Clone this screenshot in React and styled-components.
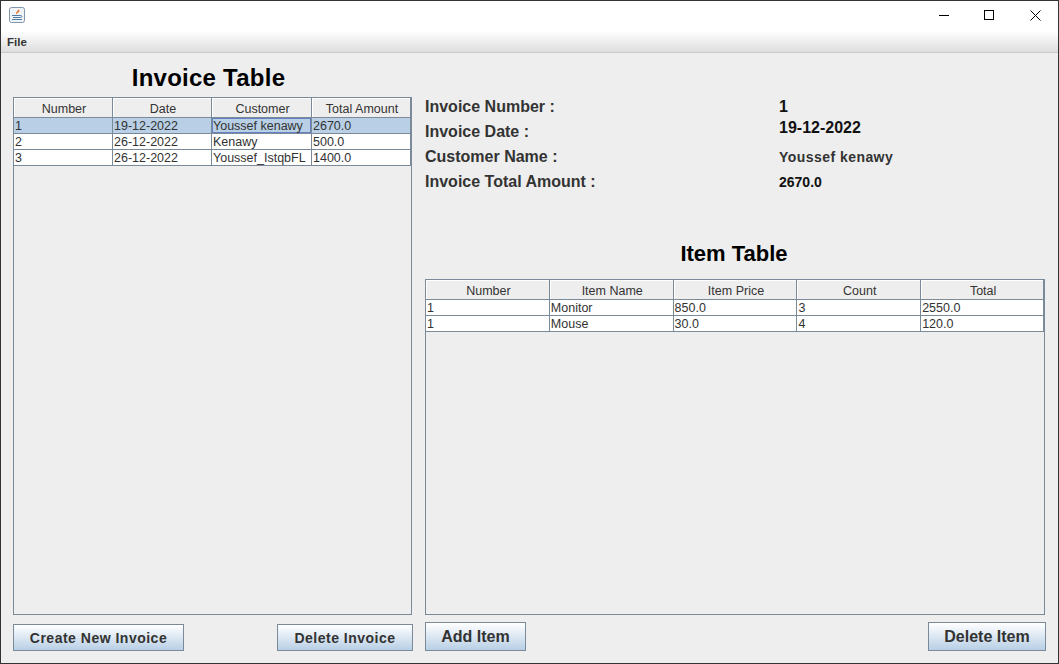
import React from 'react';
import styled, { createGlobalStyle } from 'styled-components';

const GlobalStyle = createGlobalStyle`
	html, body {
		margin: 0;
		padding: 0;
		background: #eeeeee;
	}
	body {
		font-family: "Liberation Sans", Arial, sans-serif;
	}
`;

const invoiceColumns = [
	{ title: 'Number', width: 99 },
	{ title: 'Date', width: 99 },
	{ title: 'Customer', width: 100 },
	{ title: 'Total Amount', width: 99 },
];

const invoiceRows = [
	['1', '19-12-2022', 'Youssef kenawy', '2670.0'],
	['2', '26-12-2022', 'Kenawy', '500.0'],
	['3', '26-12-2022', 'Youssef_IstqbFL', '1400.0'],
];

const itemColumns = [
	{ title: 'Number', width: 124 },
	{ title: 'Item Name', width: 124 },
	{ title: 'Item Price', width: 124 },
	{ title: 'Count', width: 124 },
	{ title: 'Total', width: 123 },
];

const itemRows = [
	['1', 'Monitor', '850.0', '3', '2550.0'],
	['1', 'Mouse', '30.0', '4', '120.0'],
];

const details = [
	{ label: 'Invoice Number :', value: '1', size: 16, shift: 0 },
	{ label: 'Invoice Date :', value: '19-12-2022', size: 16, shift: -4 },
	{ label: 'Customer Name :', value: 'Youssef kenawy', size: 14, spacing: 0.45, shift: 0 },
	{ label: 'Invoice Total Amount :', value: '2670.0', size: 14, shift: 0 },
];

const DataTable = ({ columns, rows, selectedRow, focusedColumn }) => (
	<TablePane>
		<Grid>
			<colgroup>
				{columns.map(column => (
					<col key={column.title} width={column.width} />
				))}
			</colgroup>
			<thead>
				<tr>
					{columns.map(column => (
						<HeaderCell key={column.title}>{column.title}</HeaderCell>
					))}
				</tr>
			</thead>
			<tbody>
				{rows.map((row, rowIndex) => (
					<tr key={rowIndex}>
						{row.map((cell, cellIndex) => (
							<Cell
								key={cellIndex}
								$selected={rowIndex === selectedRow}
								$focused={rowIndex === selectedRow && cellIndex === focusedColumn}
							>
								{cell}
							</Cell>
						))}
					</tr>
				))}
			</tbody>
		</Grid>
	</TablePane>
);

const JavaIcon = () => (
	<svg width="16" height="16" viewBox="0 0 16 16">
		<rect x="0.5" y="0.5" width="15" height="15" rx="2" fill="#f1f4f7" stroke="#7f97ad" />
		<path d="M9.5 2C10 3.5 6.5 4.5 7 7.5C8 6 10.5 5.5 10.5 3.5C10 3 9.8 2.4 9.5 2Z" fill="#e2762e" />
		<path d="M3 8.5H11.5M4 10.5H11M3 12.5H13" stroke="#4f7ca6" strokeWidth="1.1" />
		<path d="M11.5 8.5C13.5 8.5 13.5 10.5 11 10.5" fill="none" stroke="#4f7ca6" />
	</svg>
);

const App = () => (
	<Frame>
		<GlobalStyle />
		<TitleBar>
			<JavaIcon />
			<WindowControls>
				<WindowControl>
					<svg width="12" height="10" viewBox="0 0 12 10">
						<path d="M2 5.5H12" stroke="#000" />
					</svg>
				</WindowControl>
				<WindowControl>
					<svg width="10" height="10" viewBox="0 0 10 10">
						<rect x="0.5" y="0.5" width="9" height="9" fill="none" stroke="#000" />
					</svg>
				</WindowControl>
				<WindowControl>
					<svg width="11" height="11" viewBox="0 0 11 11">
						<path d="M0.5 0.5L10.5 10.5M10.5 0.5L0.5 10.5" stroke="#000" />
					</svg>
				</WindowControl>
			</WindowControls>
		</TitleBar>
		<MenuBar>
			<MenuItem>File</MenuItem>
		</MenuBar>
		<Content>
			<LeftColumn>
				<InvoiceTitle>Invoice Table</InvoiceTitle>
				<DataTable columns={invoiceColumns} rows={invoiceRows} selectedRow={0} focusedColumn={2} />
				<LeftActions>
					<SmallButton $width={171}>Create New Invoice</SmallButton>
					<SmallButton $width={136}>Delete Invoice</SmallButton>
				</LeftActions>
			</LeftColumn>
			<RightColumn>
				<Details>
					{details.map(detail => (
						<DetailRow key={detail.label}>
							<DetailLabel>{detail.label}</DetailLabel>
							<DetailValue $size={detail.size} $spacing={detail.spacing} $shift={detail.shift}>
								{detail.value}
							</DetailValue>
						</DetailRow>
					))}
				</Details>
				<ItemTitle>Item Table</ItemTitle>
				<DataTable columns={itemColumns} rows={itemRows} />
				<RightActions>
					<LargeButton $width={101}>Add Item</LargeButton>
					<LargeButton $width={118}>Delete Item</LargeButton>
				</RightActions>
			</RightColumn>
		</Content>
	</Frame>
);

const Frame = styled.div`
	box-sizing: border-box;
	width: 1059px;
	height: 664px;
	display: flex;
	flex-direction: column;
	border: 1px solid #333333;
	background: #eeeeee;
	overflow: hidden;
`;

const TitleBar = styled.div`
	box-sizing: border-box;
	display: flex;
	align-items: center;
	justify-content: space-between;
	height: 30px;
	padding: 0 0 2px 8px;
	background: #ffffff;
`;

const WindowControls = styled.div`
	display: flex;
`;

const WindowControl = styled.div`
	display: flex;
	align-items: center;
	justify-content: center;
	width: 46px;
	height: 28px;
`;

const MenuBar = styled.div`
	display: flex;
	align-items: center;
	box-sizing: border-box;
	height: 22px;
	padding-left: 6px;
	background: linear-gradient(#ffffff, #dddddd);
	border-bottom: 1px solid #c9c9c9;
`;

const MenuItem = styled.span`
	font-size: 11.5px;
	font-weight: bold;
	color: #333333;
`;

const Content = styled.div`
	flex: 1;
	display: flex;
	gap: 12px;
	min-height: 0;
	padding-left: 12px;
	padding-bottom: 12px;
`;

const LeftColumn = styled.div`
	display: flex;
	flex-direction: column;
	width: 400px;
`;

const RightColumn = styled.div`
	display: flex;
	flex-direction: column;
	width: 621px;
`;

const InvoiceTitle = styled.h1`
	box-sizing: border-box;
	height: 44px;
	margin: 0;
	padding: 11px 9px 0 0;
	font-size: 24px;
	line-height: 28px;
	letter-spacing: 0.25px;
	text-align: center;
	color: #000000;
`;

const ItemTitle = styled.h2`
	box-sizing: border-box;
	height: 39px;
	margin: 0;
	padding: 1px 3px 0 0;
	font-size: 22px;
	line-height: 26px;
	text-align: center;
	color: #000000;
`;

const Details = styled.div`
	box-sizing: border-box;
	display: flex;
	flex-direction: column;
	height: 187px;
	padding-top: 41px;
`;

const DetailRow = styled.div`
	display: flex;
	align-items: center;
	height: 25px;
`;

const DetailLabel = styled.span`
	width: 354px;
	font-size: 16px;
	font-weight: bold;
	color: #333333;
`;

const DetailValue = styled.span`
	font-size: ${props => props.$size}px;
	font-weight: bold;
	letter-spacing: ${props => props.$spacing || 0}px;
	color: ${props => (props.$spacing ? '#333333' : '#111111')};
	transform: translateY(${props => props.$shift}px);
`;

const TablePane = styled.div`
	flex: 1;
	box-sizing: border-box;
	margin-right: 1px;
	border: 1px solid #7a8a99;
	min-height: 0;
	overflow: hidden;
`;

const Grid = styled.table`
	table-layout: fixed;
	border-collapse: separate;
	border-spacing: 0;
	font-size: 12.5px;
	color: #333333;
`;

const HeaderCell = styled.th`
	box-sizing: border-box;
	height: 20px;
	padding: 2px 0 0 2px;
	font-weight: normal;
	text-align: center;
	background: #eeeeee;
	border-right: 1px solid #7a8a99;
	border-bottom: 1px solid #7a8a99;
	box-shadow: inset 1px 1px 0 #ffffff;
`;

const Cell = styled.td`
	box-sizing: border-box;
	height: 16px;
	padding: 1px 0 0 1px;
	line-height: 14px;
	white-space: nowrap;
	overflow: hidden;
	background: ${props => (props.$selected ? '#b8cfe5' : '#ffffff')};
	border-right: 1px solid #7a8a99;
	border-bottom: 1px solid #7a8a99;
	box-shadow: ${props => (props.$focused ? 'inset 0 0 0 1px #6382bf' : 'none')};
`;

const LeftActions = styled.div`
	display: flex;
	justify-content: space-between;
	margin-top: 9px;
`;

const RightActions = styled.div`
	display: flex;
	justify-content: space-between;
	margin-top: 7px;
`;

const SmallButton = styled.button`
	box-sizing: border-box;
	width: ${props => props.$width}px;
	height: 27px;
	padding: 0;
	font-family: inherit;
	font-size: 14px;
	font-weight: bold;
	letter-spacing: 0.5px;
	color: #333333;
	background: linear-gradient(#ffffff, #b8cfe5);
	border: 1px solid #7a8a99;
`;

const LargeButton = styled(SmallButton)`
	height: 29px;
	font-size: 16px;
	letter-spacing: 0;
`;

export default App;
